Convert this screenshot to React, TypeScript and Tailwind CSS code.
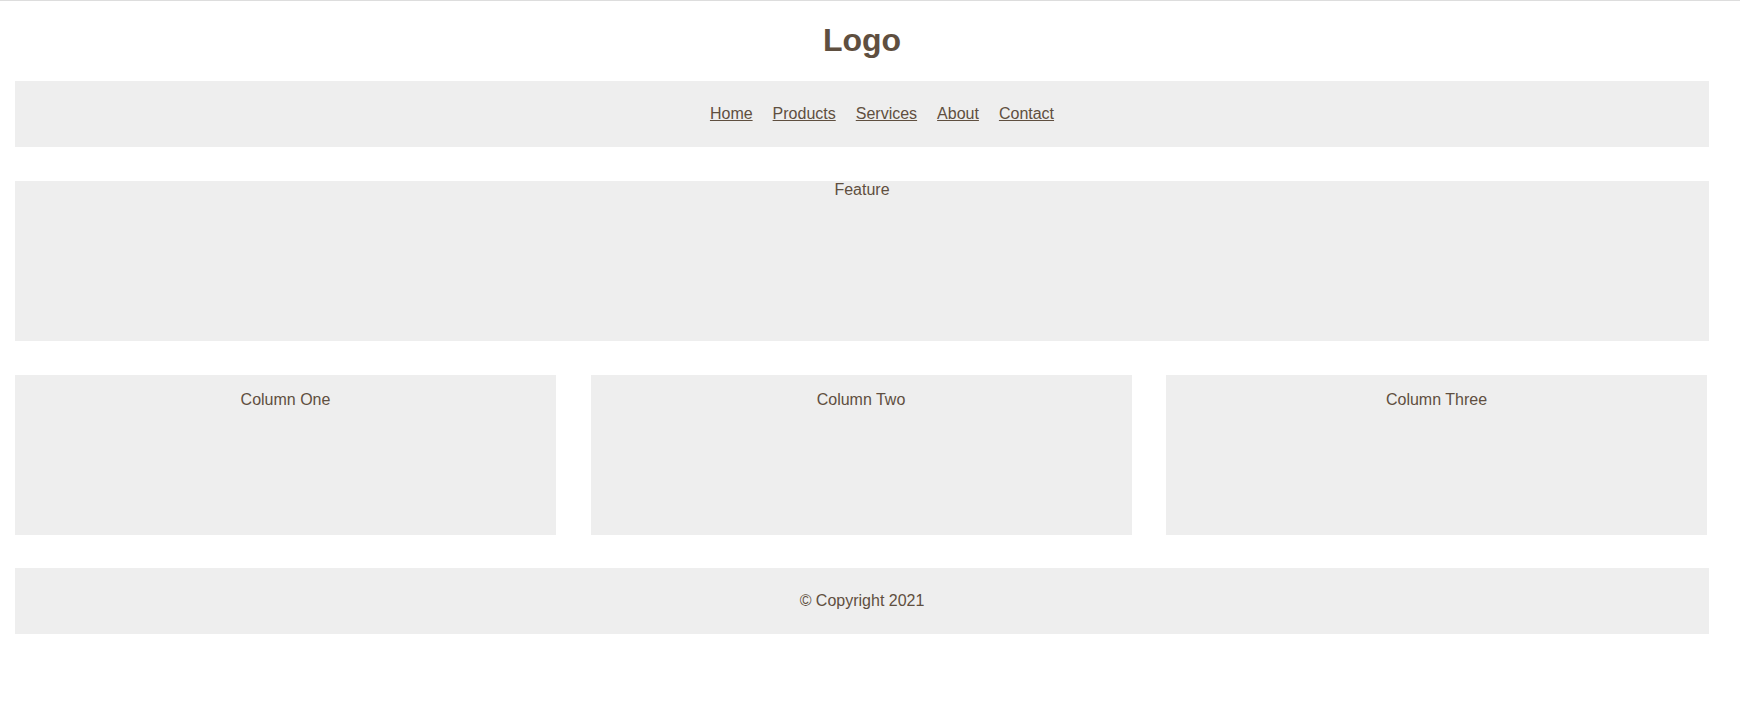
const links = ["Home", "Products", "Services", "About", "Contact"];
const columns = ["Column One", "Column Two", "Column Three"];

const App = () => {
  return (
    <div
      className="min-h-[727px] bg-white border-t border-[#dddddd] text-[#5f4f40] text-[16px]"
      style={{ fontFamily: '"Liberation Sans", Arial, sans-serif' }}
    >
      <div className="ml-[15px] w-[1694px]">
        <header className="pt-[21px] pb-[22px] text-center">
          <h1 className="text-[32px] leading-[37px] font-bold">Logo</h1>
        </header>

        <nav className="h-[66px] bg-[#eeeeee] flex items-center justify-center">
          <ul className="flex gap-[20px] pl-10 leading-[18px]">
            {links.map((link) => (
              <li key={link}>
                <a href="#" className="underline">
                  {link}
                </a>
              </li>
            ))}
          </ul>
        </nav>

        <section className="mt-[34px] h-[160px] bg-[#eeeeee] text-center leading-[18px]">
          Feature
        </section>

        <div className="mt-[34px] w-[1692px] grid grid-cols-3 gap-x-[34.5px]">
          {columns.map((col) => (
            <div
              key={col}
              className="h-[160px] bg-[#eeeeee] text-center leading-[18px] pt-[16px]"
            >
              {col}
            </div>
          ))}
        </div>

        <footer className="mt-[33px] h-[66px] bg-[#eeeeee] flex items-center justify-center leading-[18px]">
          © Copyright 2021
        </footer>
      </div>
    </div>
  );
};

export default App;
